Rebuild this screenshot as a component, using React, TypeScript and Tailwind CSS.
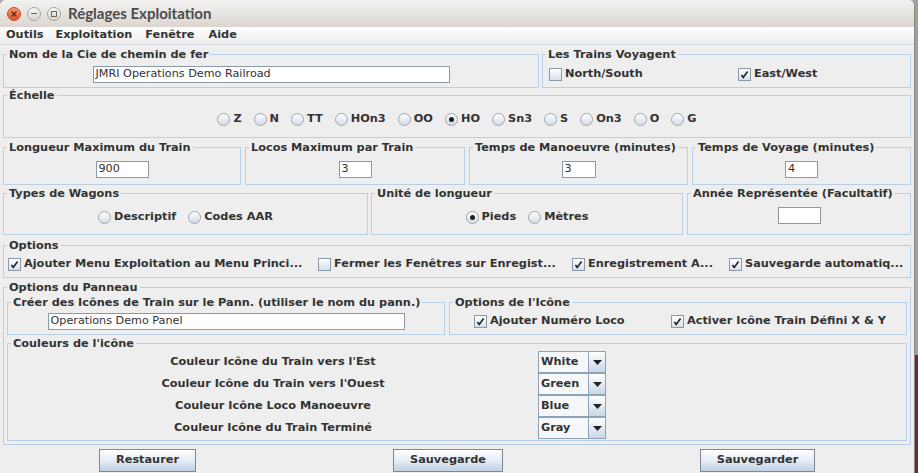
import React from "react";

const font = "font-['DejaVu_Sans',sans-serif]";

function Panel({ title, className = "", children }: { title: string; className?: string; children: React.ReactNode }) {
  return (
    <fieldset className={`min-w-0 border border-[#b8cfe5] ${className}`}>
      <legend className="ml-[3px] px-[2px] text-[11.3px] leading-[13px] font-bold text-[#333]">{title}</legend>
      {children}
    </fieldset>
  );
}

function Field({ value, className = "" }: { value: string; className?: string }) {
  return (
    <div className={`h-[17px] border border-[#8c9aa8] bg-white pl-[2px] flex items-center text-[11.2px] font-normal text-[#333] ${className}`}>
      {value}
    </div>
  );
}

function CheckIcon({ checked }: { checked?: boolean }) {
  return (
    <span className="w-[13px] h-[13px] shrink-0 border border-[#8a99a8] bg-linear-to-b from-white to-[#d6dfe9] flex items-center justify-center">
      {checked && (
        <svg width="11" height="11" viewBox="0 0 11 11">
          <path d="M2.5 6 L4.2 8.4 L8.6 2.6" fill="none" stroke="#1e1e1e" strokeWidth="1.6" />
        </svg>
      )}
    </span>
  );
}

function Check({ label, checked, className = "" }: { label: string; checked?: boolean; className?: string }) {
  return (
    <div className={`flex items-center gap-[3px] shrink-0 whitespace-nowrap ${className}`}>
      <CheckIcon checked={checked} />
      <span>{label}</span>
    </div>
  );
}

function Radio({ label, selected }: { label: string; selected?: boolean }) {
  return (
    <div className="flex items-center gap-[3px] px-[4px] whitespace-nowrap">
      <span className="w-[13px] h-[13px] rounded-full border border-[#9aa7b3] bg-linear-to-b from-white to-[#d3dbe4] flex items-center justify-center">
        {selected && <span className="w-[5px] h-[5px] rounded-full bg-[#1e1e1e]" />}
      </span>
      <span>{label}</span>
    </div>
  );
}

function Combo({ value }: { value: string }) {
  return (
    <div className="flex h-[22px] w-[68px] border border-[#8fa3b8]">
      <div className="flex-1 bg-[#f6f7f9] flex items-center pl-[2px]">{value}</div>
      <div className="w-[17px] border-l border-[#8fa3b8] bg-linear-to-b from-white to-[#c8d7e7] flex items-center justify-center">
        <svg width="9" height="5" viewBox="0 0 9 5">
          <path d="M0 0 H9 L4.5 5 Z" fill="#222" />
        </svg>
      </div>
    </div>
  );
}

function Btn({ label, className = "" }: { label: string; className?: string }) {
  return (
    <button className={`h-[23px] border border-[#7a8a99] bg-linear-to-b from-white via-[#e4edf6] to-[#bfd1e3] font-bold text-[#333] ${className}`}>
      {label}
    </button>
  );
}

const scales = ["Z", "N", "TT", "HOn3", "OO", "HO", "Sn3", "S", "On3", "O", "G"];

const colours = [
  ["Couleur Icône du Train vers l'Est", "White"],
  ["Couleur Icône du Train vers l'Ouest", "Green"],
  ["Couleur Icône Loco Manoeuvre", "Blue"],
  ["Couleur Icône du Train Terminé", "Gray"],
];

export default function App() {
  return (
    <div className={`w-[918px] h-[473px] flex bg-[#a9a5a1] overflow-hidden ${font}`}>
      {/* window */}
      <div className="w-[915px] h-full flex flex-col bg-[#eeeeee] rounded-t-[6px] overflow-hidden border-r border-[#8e8a86]">
        {/* Title bar */}
        <div className="h-[27px] shrink-0 flex items-center pl-[7px] bg-linear-to-b from-[#f3f2f0] to-[#dbd6d0]">
          <span className="w-[14px] h-[14px] rounded-full border border-[#c14b22] bg-linear-to-b from-[#f7936a] to-[#e2542a] flex items-center justify-center">
            <svg width="6" height="6" viewBox="0 0 6 6">
              <path d="M0.5 0.5 L5.5 5.5 M5.5 0.5 L0.5 5.5" stroke="#5a2a18" strokeWidth="1.3" />
            </svg>
          </span>
          <span className="ml-[6px] w-[14px] h-[14px] rounded-full border border-[#aaa49e] bg-linear-to-b from-[#f8f7f5] to-[#d9d4ce] flex items-center justify-center">
            <span className="w-[6px] h-[1.5px] bg-[#6a6560]" />
          </span>
          <span className="ml-[6px] w-[14px] h-[14px] rounded-full border border-[#aaa49e] bg-linear-to-b from-[#f8f7f5] to-[#d9d4ce] flex items-center justify-center">
            <span className="w-[6px] h-[6px] border border-[#6a6560]" />
          </span>
          <span className="ml-[7px] text-[15px] font-bold text-[#4c4c4c] font-['Lato',sans-serif]">Réglages Exploitation</span>
        </div>

        {/* Menu bar */}
        <div className="h-[18px] shrink-0 flex items-center bg-linear-to-b from-white to-[#ececec] border-b border-[#d4dbe2] text-[11.3px] font-bold text-[#333]">
          <span className="px-[6px]">Outils</span>
          <span className="px-[6px]">Exploitation</span>
          <span className="px-[6px] ml-[1px]">Fenêtre</span>
          <span className="px-[6px] ml-[2px]">Aide</span>
        </div>

        <div className="flex flex-col px-[3px] text-[11.3px] font-bold text-[#333]">
          {/* Row 1 */}
          <div className="flex gap-[3px] mt-[3px]">
            <Panel title="Nom de la Cie de chemin de fer" className="w-[536px]">
              <div className="h-[26px] flex items-center justify-center">
                <Field value="JMRI Operations Demo Railroad" className="w-[357px]" />
              </div>
            </Panel>
            <Panel title="Les Trains Voyagent" className="flex-1">
              <div className="h-[26px] flex items-center pl-[6px]">
                <Check label="North/South" className="w-[189px]" />
                <Check label="East/West" checked />
              </div>
            </Panel>
          </div>

          {/* Row 2 */}
          <Panel title="Échelle" className="mt-[1px]">
            <div className="h-[35px] flex items-center justify-center gap-[4px]">
              {scales.map((s) => (
                <Radio key={s} label={s} selected={s === "HO"} />
              ))}
            </div>
          </Panel>

          {/* Row 3 */}
          <div className="flex gap-[4px] mt-[3px]">
            <Panel title="Longueur Maximum du Train" className="w-[238px]">
              <div className="h-[30px] flex items-center justify-center">
                <Field value="900" className="w-[53px]" />
              </div>
            </Panel>
            <Panel title="Locos Maximum par Train" className="w-[220px]">
              <div className="h-[30px] flex items-center justify-center">
                <Field value="3" className="w-[33px]" />
              </div>
            </Panel>
            <Panel title="Temps de Manoeuvre (minutes)" className="w-[219px]">
              <div className="h-[30px] flex items-center justify-center">
                <Field value="3" className="w-[34px]" />
              </div>
            </Panel>
            <Panel title="Temps de Voyage (minutes)" className="flex-1">
              <div className="h-[30px] flex items-center justify-center">
                <Field value="4" className="w-[33px]" />
              </div>
            </Panel>
          </div>

          {/* Row 4 */}
          <div className="flex mt-[2px]">
            <Panel title="Types de Wagons" className="w-[365px]">
              <div className="h-[34px] flex items-center justify-center gap-[4px]">
                <Radio label="Descriptif" />
                <Radio label="Codes AAR" />
              </div>
            </Panel>
            <Panel title="Unité de longueur" className="w-[312px] ml-[3px]">
              <div className="h-[34px] flex items-center justify-center gap-[4px]">
                <Radio label="Pieds" selected />
                <Radio label="Mètres" />
              </div>
            </Panel>
            <Panel title="Année Représentée (Facultatif)" className="flex-1 ml-[4px]">
              <div className="h-[34px] flex items-center justify-center pb-[4px]">
                <Field value="" className="w-[43px] h-[16px]" />
              </div>
            </Panel>
          </div>

          {/* Row 5 */}
          <Panel title="Options" className="mt-[4px]">
            <div className="h-[25px] flex items-center pl-[4px]">
              <Check label="Ajouter Menu Exploitation au Menu Princi..." checked className="w-[310px]" />
              <Check label="Fermer les Fenêtres sur Enregist..." className="w-[254px]" />
              <Check label="Enregistrement A..." checked className="w-[157px]" />
              <Check label="Sauvegarde automatiq..." checked />
            </div>
          </Panel>

          {/* Row 6 */}
          <Panel title="Options du Panneau" className="mt-[3px]">
            <div className="flex flex-col px-[3px] pt-[2px] pb-[3px]">
              <div className="flex gap-[4px]">
                <Panel title="Créer des Icônes de Train sur le Pann. (utiliser le nom du pann.)" className="w-[438px]">
                  <div className="h-[25px] flex items-center justify-center">
                    <Field value="Operations Demo Panel" className="w-[357px]" />
                  </div>
                </Panel>
                <Panel title="Options de l'Icône" className="flex-1">
                  <div className="h-[25px] flex items-center pl-[24px]">
                    <Check label="Ajouter Numéro Loco" checked className="w-[197px]" />
                    <Check label="Activer Icône Train Défini X & Y" checked />
                  </div>
                </Panel>
              </div>
              <Panel title="Couleurs de l'icône" className="mt-[2px]">
                <div className="flex flex-col py-[1px]">
                  {colours.map(([label, value]) => (
                    <div key={label} className="h-[22px] flex items-center">
                      <div className="w-[530px] text-center">{label}</div>
                      <Combo value={value} />
                    </div>
                  ))}
                </div>
              </Panel>
            </div>
          </Panel>

          {/* Buttons */}
          <div className="flex mt-[4px] pl-[96px]">
            <Btn label="Restaurer" className="w-[97px]" />
            <Btn label="Sauvegarde" className="w-[110px] ml-[197px]" />
            <Btn label="Sauvegarder" className="w-[115px] ml-[197px]" />
          </div>
        </div>
      </div>
      <div className="flex-1 flex flex-col">
        <div className="h-[355px] bg-[#a29e9a]" />
        <div className="flex-1 bg-[#6e2b2b]" />
      </div>
    </div>
  );
}
